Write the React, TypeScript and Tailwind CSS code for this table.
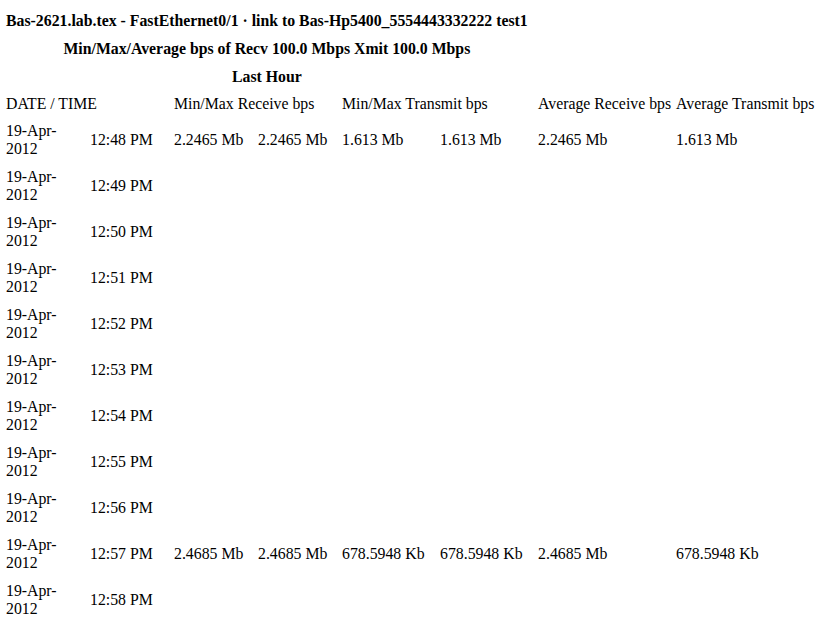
import React from 'react';

type Row = {
  time: string;
  values?: string[];
};

// one row per minute of the last hour shown in the report
const ROWS: Row[] = [
  { time: '12:48 PM', values: ['2.2465 Mb', '2.2465 Mb', '1.613 Mb', '1.613 Mb', '2.2465 Mb', '1.613 Mb'] },
  { time: '12:49 PM' },
  { time: '12:50 PM' },
  { time: '12:51 PM' },
  { time: '12:52 PM' },
  { time: '12:53 PM' },
  { time: '12:54 PM' },
  { time: '12:55 PM' },
  { time: '12:56 PM' },
  { time: '12:57 PM', values: ['2.4685 Mb', '2.4685 Mb', '678.5948 Kb', '678.5948 Kb', '2.4685 Mb', '678.5948 Kb'] },
  { time: '12:58 PM' },
];

const cell = 'pl-[6px] pr-0 py-[5px] align-middle text-left font-normal';
const headCell = 'pl-[6px] pr-0 py-[4px] align-middle text-left font-normal whitespace-nowrap';

export default function App() {
  return (
    <div className="min-h-screen bg-white text-black text-[15.8px] leading-[18px] font-['Liberation_Serif','Times_New_Roman',serif] pt-[7px]">
      <div className="inline-block px-[6px]">
        <div className="h-[28px] flex items-center font-bold whitespace-nowrap">
          Bas-2621.lab.tex - FastEthernet0/1 · link to Bas-Hp5400_5554443332222 test1
        </div>
        <div className="h-[28px] flex items-center justify-center font-bold whitespace-nowrap">
          Min/Max/Average bps of Recv 100.0 Mbps Xmit 100.0 Mbps
        </div>
        <div className="h-[28px] flex items-center justify-center font-bold">
          Last Hour
        </div>
      </div>

      <table className="table-fixed border-separate border-spacing-0 w-[828px]">
        <colgroup>
          <col className="w-[84px]" />
          <col className="w-[84px]" />
          <col className="w-[84px]" />
          <col className="w-[84px]" />
          <col className="w-[98px]" />
          <col className="w-[98px]" />
          <col className="w-[138px]" />
          <col />
        </colgroup>
        <thead>
          <tr>
            <th colSpan={2} className={headCell}>DATE / TIME</th>
            <th colSpan={2} className={headCell}>Min/Max Receive bps</th>
            <th colSpan={2} className={headCell}>Min/Max Transmit bps</th>
            <th className={headCell}>Average Receive bps</th>
            <th className={headCell}>Average Transmit bps</th>
          </tr>
        </thead>
        <tbody>
          {ROWS.map((row) => (
            <tr key={row.time}>
              <td className={cell}>
                19-Apr-
                <br />
                2012
              </td>
              <td className={`${cell} whitespace-nowrap`}>{row.time}</td>
              {Array.from({ length: 6 }).map((_, i) => (
                <td key={i} className={`${cell} whitespace-nowrap`}>
                  {row.values ? row.values[i] : ''}
                </td>
              ))}
            </tr>
          ))}
        </tbody>
      </table>
    </div>
  );
}
